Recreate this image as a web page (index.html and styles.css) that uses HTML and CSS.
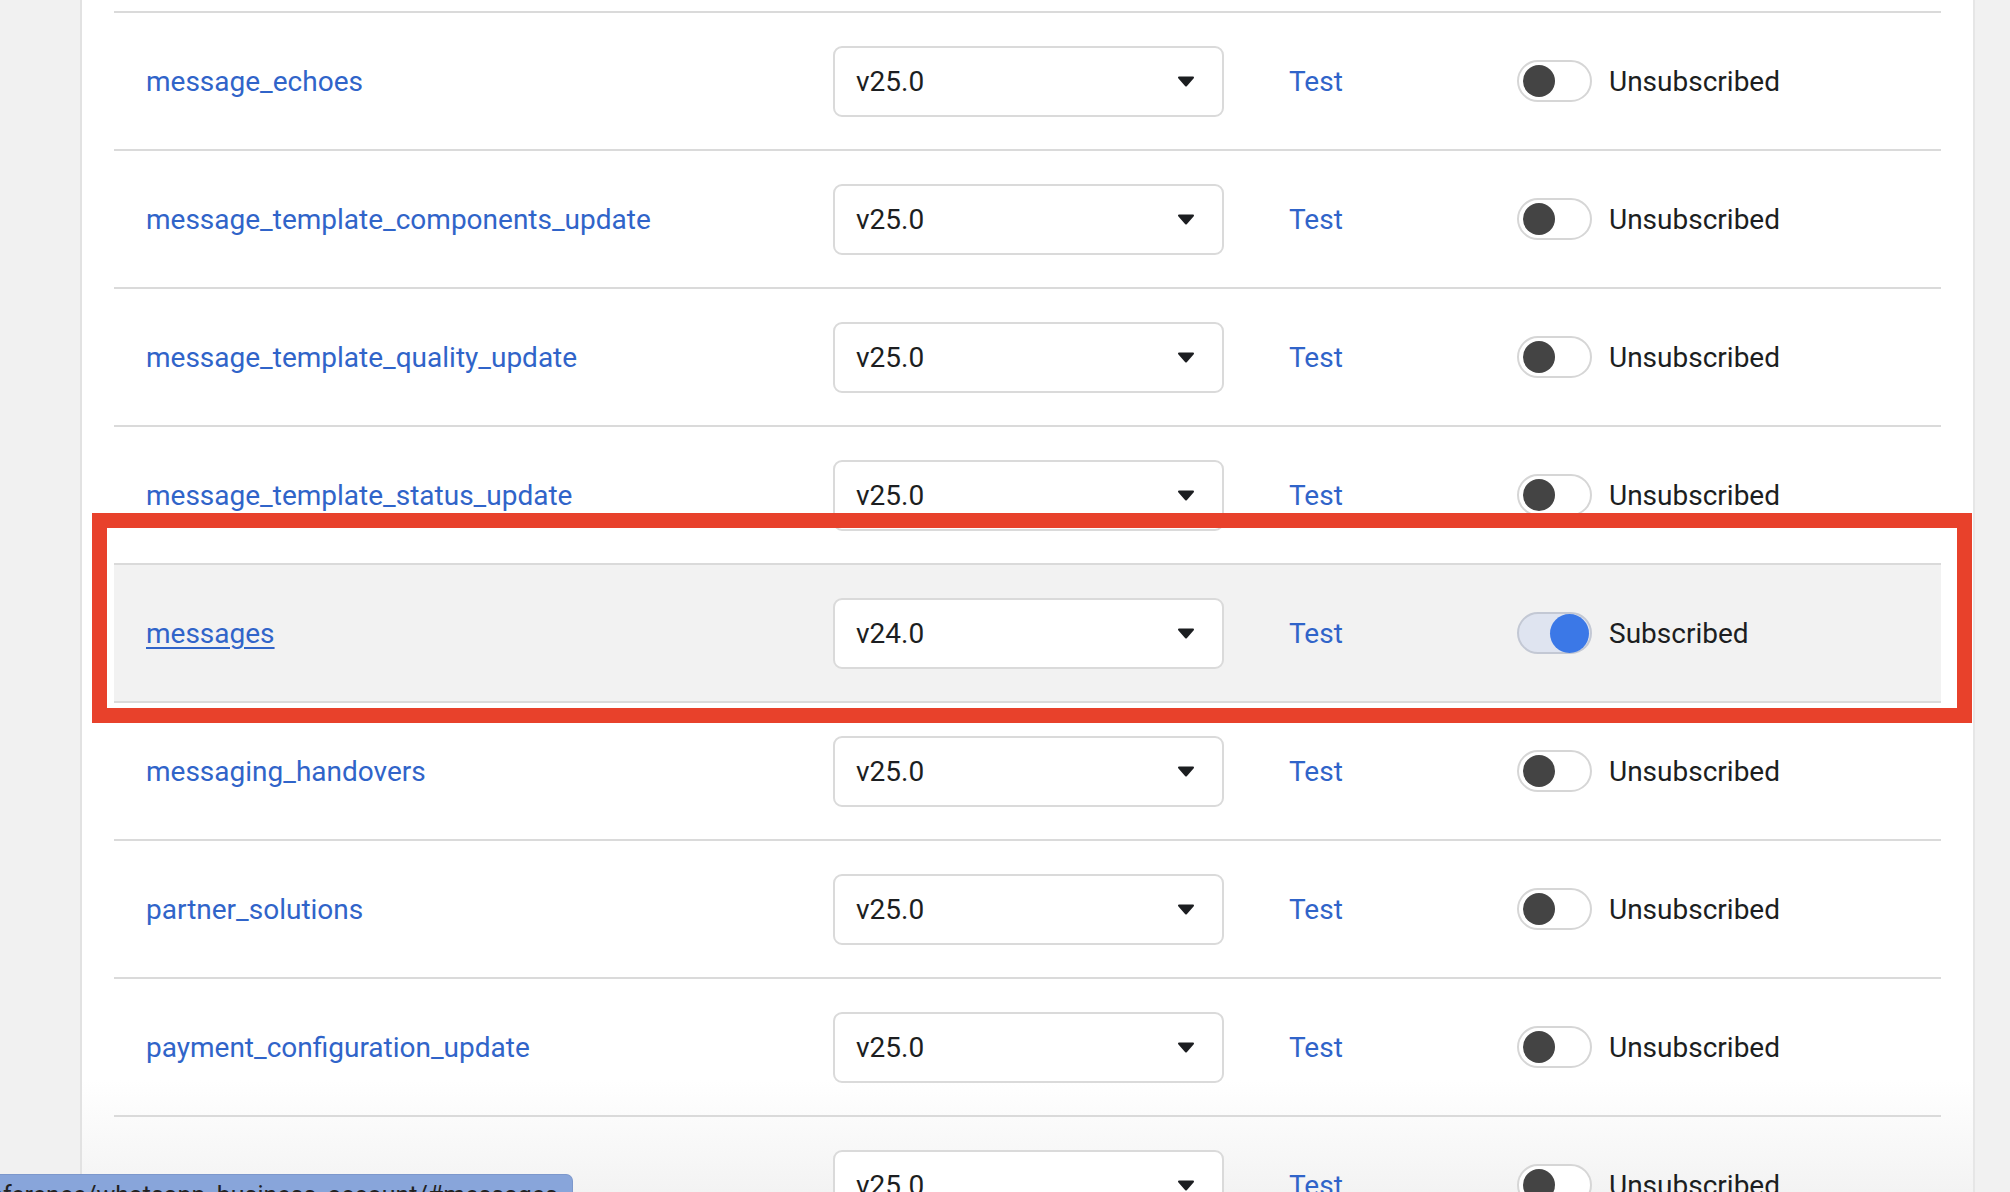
FILE: index.html
```html
<!DOCTYPE html>
<html lang="en">
<head>
    <meta charset="UTF-8" />
    <title>Webhook fields</title>
    <link rel="stylesheet" href="styles.css">
</head>
<body>
    <main class="card">
        <ul class="fields">
            <li class="field">
                <a class="name" href="#message_echoes">message_echoes</a>
                <div class="version"><span>v25.0</span><svg width="18" height="11" viewBox="0 0 18 11"><path d="M2 1.5h14L9 9.5z" /></svg></div>
                <a class="test" href="#">Test</a>
                <span class="switch"><span class="knob"></span></span>
                <span class="state">Unsubscribed</span>
            </li>
            <li class="field">
                <a class="name" href="#message_template_components_update">message_template_components_update</a>
                <div class="version"><span>v25.0</span><svg width="18" height="11" viewBox="0 0 18 11"><path d="M2 1.5h14L9 9.5z" /></svg></div>
                <a class="test" href="#">Test</a>
                <span class="switch"><span class="knob"></span></span>
                <span class="state">Unsubscribed</span>
            </li>
            <li class="field">
                <a class="name" href="#message_template_quality_update">message_template_quality_update</a>
                <div class="version"><span>v25.0</span><svg width="18" height="11" viewBox="0 0 18 11"><path d="M2 1.5h14L9 9.5z" /></svg></div>
                <a class="test" href="#">Test</a>
                <span class="switch"><span class="knob"></span></span>
                <span class="state">Unsubscribed</span>
            </li>
            <li class="field">
                <a class="name" href="#message_template_status_update">message_template_status_update</a>
                <div class="version"><span>v25.0</span><svg width="18" height="11" viewBox="0 0 18 11"><path d="M2 1.5h14L9 9.5z" /></svg></div>
                <a class="test" href="#">Test</a>
                <span class="switch"><span class="knob"></span></span>
                <span class="state">Unsubscribed</span>
            </li>
            <li class="field active">
                <a class="name" href="#messages">messages</a>
                <div class="version"><span>v24.0</span><svg width="18" height="11" viewBox="0 0 18 11"><path d="M2 1.5h14L9 9.5z" /></svg></div>
                <a class="test" href="#">Test</a>
                <span class="switch on"><span class="knob"></span></span>
                <span class="state">Subscribed</span>
            </li>
            <li class="field">
                <a class="name" href="#messaging_handovers">messaging_handovers</a>
                <div class="version"><span>v25.0</span><svg width="18" height="11" viewBox="0 0 18 11"><path d="M2 1.5h14L9 9.5z" /></svg></div>
                <a class="test" href="#">Test</a>
                <span class="switch"><span class="knob"></span></span>
                <span class="state">Unsubscribed</span>
            </li>
            <li class="field">
                <a class="name" href="#partner_solutions">partner_solutions</a>
                <div class="version"><span>v25.0</span><svg width="18" height="11" viewBox="0 0 18 11"><path d="M2 1.5h14L9 9.5z" /></svg></div>
                <a class="test" href="#">Test</a>
                <span class="switch"><span class="knob"></span></span>
                <span class="state">Unsubscribed</span>
            </li>
            <li class="field">
                <a class="name" href="#payment_configuration_update">payment_configuration_update</a>
                <div class="version"><span>v25.0</span><svg width="18" height="11" viewBox="0 0 18 11"><path d="M2 1.5h14L9 9.5z" /></svg></div>
                <a class="test" href="#">Test</a>
                <span class="switch"><span class="knob"></span></span>
                <span class="state">Unsubscribed</span>
            </li>
            <li class="field">
                <a class="name" href="#phone_number_name_update">phone_number_name_update</a>
                <div class="version"><span>v25.0</span><svg width="18" height="11" viewBox="0 0 18 11"><path d="M2 1.5h14L9 9.5z" /></svg></div>
                <a class="test" href="#">Test</a>
                <span class="switch"><span class="knob"></span></span>
                <span class="state">Unsubscribed</span>
            </li>
        </ul>
    </main>

    <!-- annotation around the subscribed row -->
    <div class="highlight"></div>

    <div class="status-bubble"><span>https://developers.facebook.com/docs/graph-api/reference/whatsapp_business_account/#messages</span></div>
</body>
</html>
```

FILE: styles.css
```css
* {
    box-sizing: border-box;
}

body {
    margin: 0;
    height: 1192px;
    background: #f1f1f1;
    font-family: Roboto, 'Liberation Sans', sans-serif;
    color: #1c1e21;
    overflow: hidden;
}

.card {
    margin-left: 80px;
    width: 1895px;
    height: 1192px;
    overflow: hidden;
    /* page fades to grey towards the bottom of the window */
    background: linear-gradient(#fff 1080px, #f3f3f3 1192px);
    border-left: 2px solid #e2e2e2;
    border-right: 2px solid #e6e6e6;
    padding: 11px 32px 0 32px;
}

.fields {
    list-style: none;
    margin: 0;
    padding: 0;
    border-top: 2px solid #dadada;
}

.field {
    display: flex;
    align-items: center;
    height: 138px;
    padding-left: 32px;
    border-bottom: 2px solid #dadada;
    font-size: 28px;
}

.field.active {
    background: #f2f2f2;
}

.name {
    width: 687px;
    color: #3064c9;
    text-decoration: none;
}

.field.active .name {
    text-decoration: underline;
    text-underline-offset: 4px;
    text-decoration-thickness: 2px;
}

.version {
    display: flex;
    align-items: center;
    justify-content: space-between;
    width: 391px;
    height: 71px;
    margin-right: 65px;
    padding: 0 27px 0 21px;
    background: #fff;
    border: 2px solid #dadada;
    border-radius: 9px;
}

.version svg path {
    fill: #1c1e21;
    stroke: #1c1e21;
    stroke-width: 2;
    stroke-linejoin: round;
}

.test {
    width: 228px;
    color: #3064c9;
    text-decoration: none;
}

.switch {
    display: flex;
    align-items: center;
    width: 75px;
    height: 42px;
    margin-right: 17px;
    padding: 0 4px;
    background: #fff;
    border: 2px solid #d6d6d6;
    border-radius: 21px;
}

.knob {
    width: 32px;
    height: 32px;
    border-radius: 50%;
    background: #444;
}

.switch.on {
    justify-content: flex-end;
    padding: 0 1px;
    background: #dfe4f0;
    border-color: #c3c8d4;
}

.switch.on .knob {
    width: 39px;
    height: 39px;
    background: #3b78e7;
}

.state {
    color: #1c1e21;
}

.highlight {
    position: absolute;
    left: 92px;
    top: 513px;
    width: 1880px;
    height: 210px;
    border: 15px solid #e8412b;
}

.status-bubble {
    position: fixed;
    left: 0;
    top: 1174px;
    width: 573px;
    height: 40px;
    display: flex;
    justify-content: flex-end;
    overflow: hidden;
    padding: 6px 14px 0 0;
    background: #88a5da;
    border: 1px solid #7d98cc;
    border-left: none;
    border-top-right-radius: 7px;
    font-size: 25px;
    color: #222;
    white-space: nowrap;
}
```
